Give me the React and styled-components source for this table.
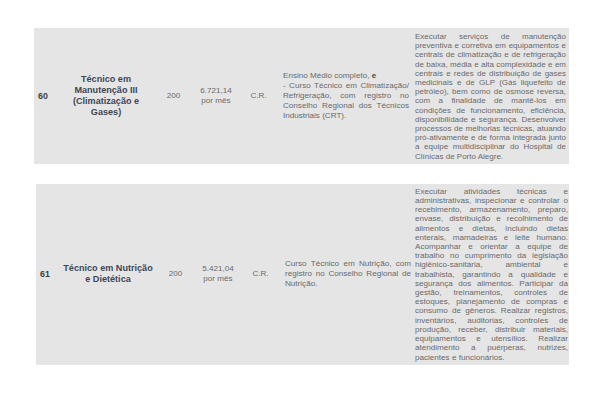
import React from "react";
import styled, { createGlobalStyle } from "styled-components";

const Global = createGlobalStyle`
  html, body {
    margin: 0;
    padding: 0;
    background: #ffffff;
  }
  body {
    width: 600px;
    height: 400px;
    overflow: hidden;
    font-family: "Liberation Sans", Arial, sans-serif;
  }
`;

const Page = styled.div`
  display: flex;
  flex-direction: column;
  gap: 20px;
  padding: 28px 31px 0 34px;
`;

const Row = styled.div`
  display: grid;
  grid-template-columns: 24px 96px 39px 46px 39px 133px 158px;
  background: #e5e5e5;
  margin-left: ${(p) => p.$shift || 0}px;
  color: #6a6a6a;
  font-size: 8.1px;
`;

const Cell = styled.div`
  display: flex;
  align-items: center;
  justify-content: center;
  text-align: center;
  line-height: 10px;
`;

const Num = styled(Cell)`
  font-weight: bold;
  font-size: 8.8px;
  color: #3f3f3f;
  justify-content: flex-start;
  padding-left: 4px;
`;

const Title = styled(Cell)`
  font-weight: bold;
  font-size: 9.1px;
  line-height: 11px;
  color: #3d4757;
  padding: 0 1px;
`;

const Req = styled(Cell)`
  text-align: justify;
  padding: 0 2px 0 5px;
  line-height: 10px;
`;

const Desc = styled.div`
  text-align: justify;
  padding: ${(p) => p.$pad};
  line-height: 9.2px;
  font-size: ${(p) => p.$fs}px;
`;

const Bold = styled.b`
  color: #4a4a4a;
`;

export default function App() {
  return (
    <>
      <Global />
      <Page>
        <Row>
          <Num>60</Num>
          <Title>Técnico em Manutenção III (Climatização e Gases)</Title>
          <Cell>200</Cell>
          <Cell>6.721,14<br />por mês</Cell>
          <Cell>C.R.</Cell>
          <Req>
            <div>
              Ensino Médio completo, <Bold>e</Bold>
              <br />
              - Curso Técnico em Climatização/ Refrigeração, com registro no
              Conselho Regional dos Técnicos Industriais (CRT).
            </div>
          </Req>
          <Desc $pad="4px 3px 3px 4px" $fs={8}>
            Executar serviços de manutenção preventiva e corretiva em
            equipamentos e centrais de climatização e de refrigeração de baixa,
            média e alta complexidade e em centrais e redes de distribuição de
            gases medicinais e de GLP (Gás liquefeito de petróleo), bem como de
            osmose reversa, com a finalidade de mantê-los em condições de
            funcionamento, eficiência, disponibilidade e segurança. Desenvolver
            processos de melhorias técnicas, atuando pró-ativamente e de forma
            integrada junto a equipe multidisciplinar do Hospital de Clínicas
            de Porto Alegre.
          </Desc>
        </Row>
        <Row $shift={2}>
          <Num>61</Num>
          <Title>Técnico em Nutrição e Dietética</Title>
          <Cell>200</Cell>
          <Cell>5.421,04<br />por mês</Cell>
          <Cell>C.R.</Cell>
          <Req>
            <div>
              Curso Técnico em Nutrição, com registro no Conselho Regional de
              Nutrição.
            </div>
          </Req>
          <Desc $pad="3px 3px 3px 2px" $fs={8.1}>
            Executar atividades técnicas e administrativas, inspecionar e
            controlar o recebimento, armazenamento, preparo, envase,
            distribuição e recolhimento de alimentos e dietas, incluindo dietas
            enterais, mamadeiras e leite humano. Acompanhar e orientar a equipe
            de trabalho no cumprimento da legislação higiênico-sanitária,
            ambiental e trabalhista, garantindo a qualidade e segurança dos
            alimentos. Participar da gestão, treinamentos, controles de
            estoques, planejamento de compras e consumo de gêneros. Realizar
            registros, inventários, auditorias, controles de produção, receber,
            distribuir materiais, equipamentos e utensílios. Realizar
            atendimento a puérperas, nutrizes, pacientes e funcionários.
          </Desc>
        </Row>
      </Page>
    </>
  );
}
